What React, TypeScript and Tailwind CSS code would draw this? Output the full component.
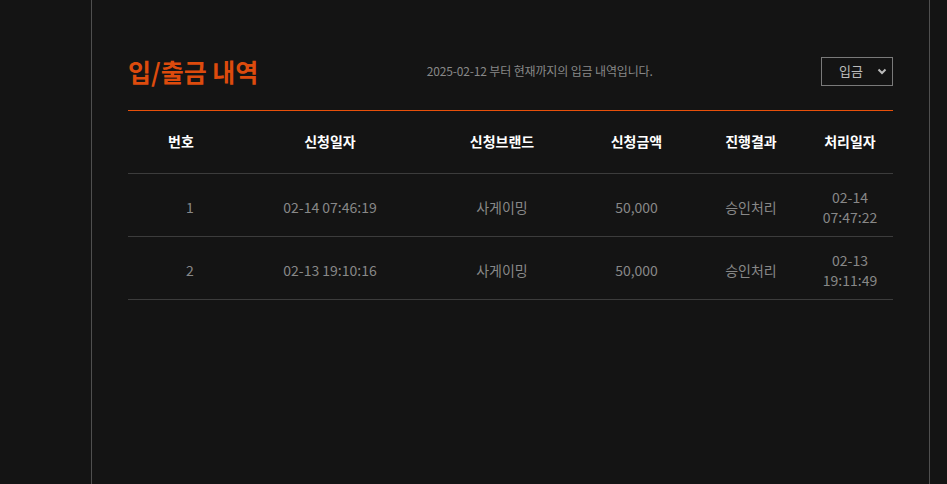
const rows = [
  { no: 1, date: '02-14 07:46:19', brand: '사게이밍', amount: '50,000', status: '승인처리', done: ['02-14', '07:47:22'] },
  { no: 2, date: '02-13 19:10:16', brand: '사게이밍', amount: '50,000', status: '승인처리', done: ['02-13', '19:11:49'] }
]

const cols = ['번호', '신청일자', '신청브랜드', '신청금액', '진행결과', '처리일자']
const widths = ['w-[106px]', 'w-[192px]', 'w-[152px]', 'w-[117px]', 'w-[112px]', 'w-[86px]']

export default function App() {
  return (
    <div className="min-h-screen bg-[#141414] font-['Noto_Sans_CJK_KR','Noto_Sans',sans-serif]">
      <div className="ml-[91px] min-h-screen w-[839px] border-x border-[#4f4f4f] px-[36px] pt-[32px]">
        <div className="flex h-[79px] items-center justify-between border-b border-[#e8500a]">
          <h1 className="text-[25px] font-bold leading-[39px] text-[#dd4b0d]">입/출금 내역</h1>
          <p className="text-[12px] leading-[18px] tracking-[-0.15px] text-[#888]">
            2025-02-12 부터 현재까지의 입금 내역입니다.
          </p>
          <div className="flex h-[29px] w-[72px] items-center justify-between border border-[#7a7a7a] pl-[17px] pr-[4px] text-[13px] text-[#bbb]">
            <span>입금</span>
            <svg width="12" height="12" viewBox="0 0 12 12" fill="none">
              <path d="M2.5 4.5 6 8l3.5-3.5" stroke="#bbb" strokeWidth="2" />
            </svg>
          </div>
        </div>
        <table className="w-full table-fixed border-collapse">
          <colgroup>
            {widths.map((w, i) => (
              <col key={i} className={w} />
            ))}
          </colgroup>
          <thead>
            <tr className="border-b border-[#3c3c3c]">
              {cols.map((c) => (
                <th key={c} className="h-[62px] p-0 text-center text-[14px] font-bold text-white">
                  {c}
                </th>
              ))}
            </tr>
          </thead>
          <tbody>
            {rows.map((r) => (
              <tr key={r.no} className="border-b border-[#3c3c3c] text-center text-[14px] leading-[20px] text-[#888]">
                <td className="pb-[9px] pl-[18px] pt-[13px]">{r.no}</td>
                <td className="pb-[9px] pt-[13px]">{r.date}</td>
                <td className="pb-[9px] pt-[13px]">{r.brand}</td>
                <td className="pb-[9px] pt-[13px]">{r.amount}</td>
                <td className="pb-[9px] pt-[13px]">{r.status}</td>
                <td className="pb-[9px] pt-[13px]">
                  {r.done[0]}
                  <br />
                  {r.done[1]}
                </td>
              </tr>
            ))}
          </tbody>
        </table>
      </div>
    </div>
  )
}
